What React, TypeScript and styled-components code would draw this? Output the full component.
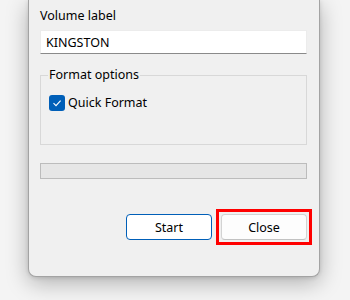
import React from "react";
import styled, { createGlobalStyle } from "styled-components";

const Global = createGlobalStyle`
  html, body { margin: 0; padding: 0; }
  body {
    background: #f4f4f4;
    width: 350px;
    height: 300px;
    overflow: hidden;
    font-family: "Noto Sans", "Open Sans", sans-serif;
    font-size: 12px;
    color: #000;
  }
`;

const Dialog = styled.div`
  box-sizing: border-box;
  margin-left: 28px;
  width: 292px;
  height: 277px;
  background: #f0f0f0;
  border: 1px solid #a3a3a3;
  border-top: none;
  border-radius: 0 0 8px 8px;
  box-shadow: 0 6px 22px rgba(0, 0, 0, 0.28), 0 1px 4px rgba(0, 0, 0, 0.12);
  padding: 8px 12px 0 11px;
  display: flex;
  flex-direction: column;
`;

const Label = styled.div`
  font-size: 12.5px;
  line-height: 16px;
`;

const TextInput = styled.div`
  box-sizing: border-box;
  margin-top: 6px;
  height: 24px;
  background: #ffffff;
  border: 1px solid #ececec;
  border-bottom: 1px solid #8a8a8a;
  padding: 0 5px;
  display: flex;
  align-items: center;
  font-size: 12.5px;
`;

const Group = styled.fieldset`
  box-sizing: border-box;
  margin: 13px 0 0;
  padding: 11px 8px 0 8px;
  height: 78px;
  border: 1px solid #d8d8d8;
  min-width: 0;
`;

const Legend = styled.legend`
  padding: 0 1px;
  margin-left: -1px;
  font-size: 12.5px;
  line-height: 16px;
`;

const CheckRow = styled.label`
  display: flex;
  align-items: center;
  gap: 3px;
  font-size: 12.5px;
`;

const Box = styled.span`
  width: 16px;
  height: 16px;
  border-radius: 3px;
  background: #005fb8;
  display: flex;
  align-items: center;
  justify-content: center;
`;

const Progress = styled.div`
  box-sizing: border-box;
  margin-top: 18px;
  height: 16px;
  background: #e6e6e6;
  border: 1px solid #bcbcbc;
`;

const Buttons = styled.div`
  margin-top: 35px;
  display: flex;
  justify-content: flex-end;
  align-items: center;
  gap: 9px;
`;

const Highlight = styled.span`
  display: flex;
  margin: -5px;
  padding: 2px;
  border: 3px solid #ff0000;
`;

const Button = styled.button<{ $primary?: boolean }>`
  box-sizing: border-box;
  width: 86px;
  height: 26px;
  border-radius: 4px;
  font-family: inherit;
  font-size: 12.5px;
  color: #000;
  background: ${(p) => (p.$primary ? "#ffffff" : "#fdfdfd")};
  border: 1px solid ${(p) => (p.$primary ? "#005fb8" : "#d3d3d3")};
  ${(p) => (p.$primary ? "" : "border-bottom-color: #c2c2c2;")}
  outline: none;
  padding: 0;
`;

export default function App() {
  return (
    <>
      <Global />
      <Dialog>
        <Label>Volume label</Label>
        <TextInput>KINGSTON</TextInput>
        <Group>
          <Legend>Format options</Legend>
          <CheckRow>
            <Box>
              <svg width="10" height="10" viewBox="0 0 10 10">
                <path d="M1.5 5.2 L4 7.6 L8.6 2.6" fill="none" stroke="#fff" strokeWidth="1.1" />
              </svg>
            </Box>
            Quick Format
          </CheckRow>
        </Group>
        <Progress />
        <Buttons>
          <Button $primary>Start</Button>
          <Highlight>
            <Button>Close</Button>
          </Highlight>
        </Buttons>
      </Dialog>
    </>
  );
}
